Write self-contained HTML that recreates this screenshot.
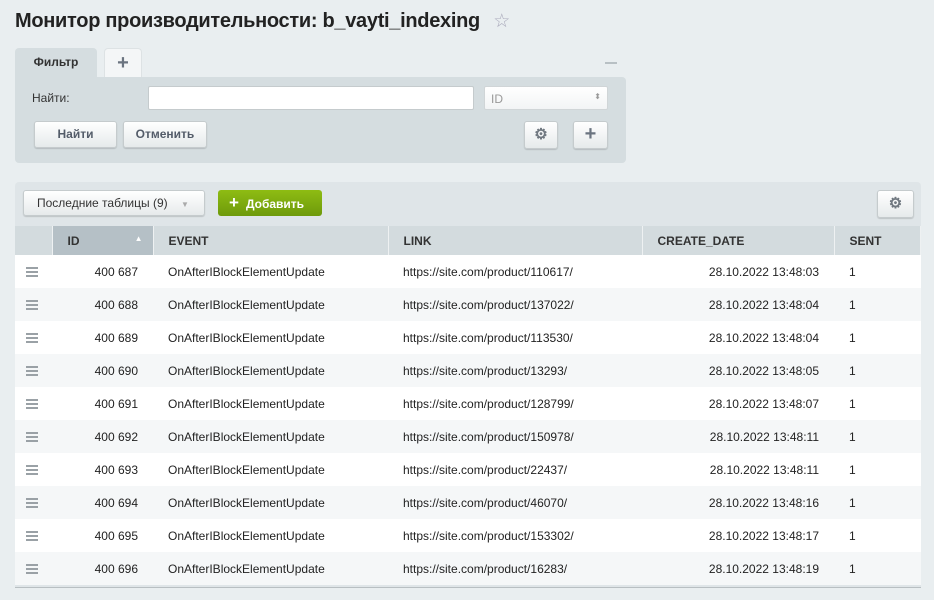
<!DOCTYPE html><html><head><meta charset="utf-8"><style>
body{margin:0;width:934px;height:600px;background:#e9eef0;font-family:"Liberation Sans",sans-serif;position:relative;overflow:hidden;color:#000}
.a{position:absolute}
h1{position:absolute;left:15px;top:10px;margin:0;font-size:20px;font-weight:bold;color:#222;letter-spacing:-0.3px}
.btn{position:absolute;background:linear-gradient(#fff,#e6eaeb);border:1px solid #c5cbcd;border-radius:3px;box-shadow:0 1px 1px rgba(0,0,0,.15);font-size:12px;font-weight:bold;color:#535c69;text-align:center;box-sizing:border-box}
table{border-collapse:collapse;font-size:12px;color:#222}
td{height:33px;padding:0;box-sizing:border-box}
th{height:30px;font-size:12px;text-align:left;color:#333;background:#d3dbde;border-right:1px solid #eef1f2;padding:0 0 0 15px;box-sizing:border-box}
tr:nth-child(odd) td{background:#fff}tr:nth-child(even) td{background:#f5f7f8}
.h{padding-left:11px}
.h i{display:block;width:12px;height:2px;background:#9aa1a6;margin:2px 0}
</style></head><body>
<h1>Монитор производительности: b_vayti_indexing <span style="color:#aab;font-size:19px;font-weight:normal;margin-left:8px">☆</span></h1>
<div class="a" style="left:15px;top:48px;width:82px;height:30px;background:#d5dde0;border-radius:4px 4px 0 0;font-size:12px;font-weight:bold;text-align:center;line-height:28px;color:#333">Фильтр</div>
<div class="a" style="left:104px;top:48px;width:38px;height:30px;background:#f4f6f7;border-radius:4px 4px 0 0;border:1px solid #dde2e4;border-bottom:0;box-sizing:border-box;text-align:center;font-size:20px;font-weight:bold;line-height:28px;color:#6b7480">+</div>
<div class="a" style="left:605px;top:62px;width:12px;height:2px;background:#b8c0c4"></div>
<div class="a" style="left:15px;top:77px;width:611px;height:86px;background:#d5dde0;border-radius:0 4px 4px 4px"></div>
<div class="a" style="left:32px;top:91px;font-size:12px;color:#333">Найти:</div>
<div class="a" style="left:148px;top:86px;width:326px;height:24px;background:#fff;border:1px solid #c5cbcd;border-radius:2px;box-sizing:border-box"></div>
<div class="a" style="left:484px;top:86px;width:124px;height:24px;background:linear-gradient(#fff,#f2f4f5);border:1px solid #d0d5d7;border-radius:2px;box-sizing:border-box;font-size:12px;color:#999;padding:5px 0 0 6px">ID<span style="position:absolute;right:6px;top:5px;font-size:8px">⬍</span></div>
<div class="btn" style="left:34px;top:121px;width:83px;height:27px;line-height:25px">Найти</div>
<div class="btn" style="left:123px;top:121px;width:84px;height:27px;line-height:25px">Отменить</div>
<div class="btn" style="left:524px;top:121px;width:34px;height:28px;line-height:26px;font-size:15px;color:#707880">⚙</div>
<div class="btn" style="left:573px;top:121px;width:35px;height:28px;line-height:25px;font-size:20px;color:#6b7480">+</div>
<div class="a" style="left:15px;top:182px;width:906px;height:405px;background:#dfe5e8;border-radius:4px 4px 0 0;border-bottom:1px solid #b8bfc2"></div>
<div class="btn" style="left:23px;top:190px;width:182px;height:26px;line-height:24px;font-weight:normal;color:#333;text-align:left;padding-left:13px">Последние таблицы (9) <span style="color:#aaa;font-size:8px;margin-left:10px">▼</span></div>
<div class="a" style="left:218px;top:190px;width:104px;height:26px;background:linear-gradient(#8ebc13,#6e9a0b);border-radius:3px;color:#fff;font-size:12px;font-weight:bold;line-height:26px;padding-left:11px;box-sizing:border-box"><span style="font-size:17px;margin-right:7px">+</span>Добавить</div>
<div class="btn" style="left:877px;top:190px;width:37px;height:28px;line-height:26px;font-size:15px;color:#707880">⚙</div>
<table class="a" style="left:15px;top:226px;width:906px">
<tr><th style="width:37px;padding:0;background:#d3dbde"></th><th style="width:101px;background:#b5c0c6">ID<span style="float:right;margin-right:10px;font-size:8px;color:#fff">▲</span></th><th style="width:235px">EVENT</th><th style="width:254px">LINK</th><th style="width:192px">CREATE_DATE</th><th>SENT</th></tr>
</table>
<table class="a" style="left:15px;top:255px;width:906px;background:#fff">
<tr><td class="h" style="width:37px"><i></i><i></i><i></i></td><td style="width:101px;text-align:right;padding-right:15px">400 687</td><td style="width:235px;padding-left:15px">OnAfterIBlockElementUpdate</td><td style="width:254px;padding-left:15px">https://site.com/product/110617/</td><td style="width:192px;text-align:right;padding-right:15px">28.10.2022 13:48:03</td><td style="padding-left:15px">1</td></tr>
<tr><td class="h"><i></i><i></i><i></i></td><td style="text-align:right;padding-right:15px">400 688</td><td style="padding-left:15px">OnAfterIBlockElementUpdate</td><td style="padding-left:15px">https://site.com/product/137022/</td><td style="text-align:right;padding-right:15px">28.10.2022 13:48:04</td><td style="padding-left:15px">1</td></tr>
<tr><td class="h"><i></i><i></i><i></i></td><td style="text-align:right;padding-right:15px">400 689</td><td style="padding-left:15px">OnAfterIBlockElementUpdate</td><td style="padding-left:15px">https://site.com/product/113530/</td><td style="text-align:right;padding-right:15px">28.10.2022 13:48:04</td><td style="padding-left:15px">1</td></tr>
<tr><td class="h"><i></i><i></i><i></i></td><td style="text-align:right;padding-right:15px">400 690</td><td style="padding-left:15px">OnAfterIBlockElementUpdate</td><td style="padding-left:15px">https://site.com/product/13293/</td><td style="text-align:right;padding-right:15px">28.10.2022 13:48:05</td><td style="padding-left:15px">1</td></tr>
<tr><td class="h"><i></i><i></i><i></i></td><td style="text-align:right;padding-right:15px">400 691</td><td style="padding-left:15px">OnAfterIBlockElementUpdate</td><td style="padding-left:15px">https://site.com/product/128799/</td><td style="text-align:right;padding-right:15px">28.10.2022 13:48:07</td><td style="padding-left:15px">1</td></tr>
<tr><td class="h"><i></i><i></i><i></i></td><td style="text-align:right;padding-right:15px">400 692</td><td style="padding-left:15px">OnAfterIBlockElementUpdate</td><td style="padding-left:15px">https://site.com/product/150978/</td><td style="text-align:right;padding-right:15px">28.10.2022 13:48:11</td><td style="padding-left:15px">1</td></tr>
<tr><td class="h"><i></i><i></i><i></i></td><td style="text-align:right;padding-right:15px">400 693</td><td style="padding-left:15px">OnAfterIBlockElementUpdate</td><td style="padding-left:15px">https://site.com/product/22437/</td><td style="text-align:right;padding-right:15px">28.10.2022 13:48:11</td><td style="padding-left:15px">1</td></tr>
<tr><td class="h"><i></i><i></i><i></i></td><td style="text-align:right;padding-right:15px">400 694</td><td style="padding-left:15px">OnAfterIBlockElementUpdate</td><td style="padding-left:15px">https://site.com/product/46070/</td><td style="text-align:right;padding-right:15px">28.10.2022 13:48:16</td><td style="padding-left:15px">1</td></tr>
<tr><td class="h"><i></i><i></i><i></i></td><td style="text-align:right;padding-right:15px">400 695</td><td style="padding-left:15px">OnAfterIBlockElementUpdate</td><td style="padding-left:15px">https://site.com/product/153302/</td><td style="text-align:right;padding-right:15px">28.10.2022 13:48:17</td><td style="padding-left:15px">1</td></tr>
<tr><td class="h"><i></i><i></i><i></i></td><td style="text-align:right;padding-right:15px">400 696</td><td style="padding-left:15px">OnAfterIBlockElementUpdate</td><td style="padding-left:15px">https://site.com/product/16283/</td><td style="text-align:right;padding-right:15px">28.10.2022 13:48:19</td><td style="padding-left:15px">1</td></tr>
</table>
</body></html>
